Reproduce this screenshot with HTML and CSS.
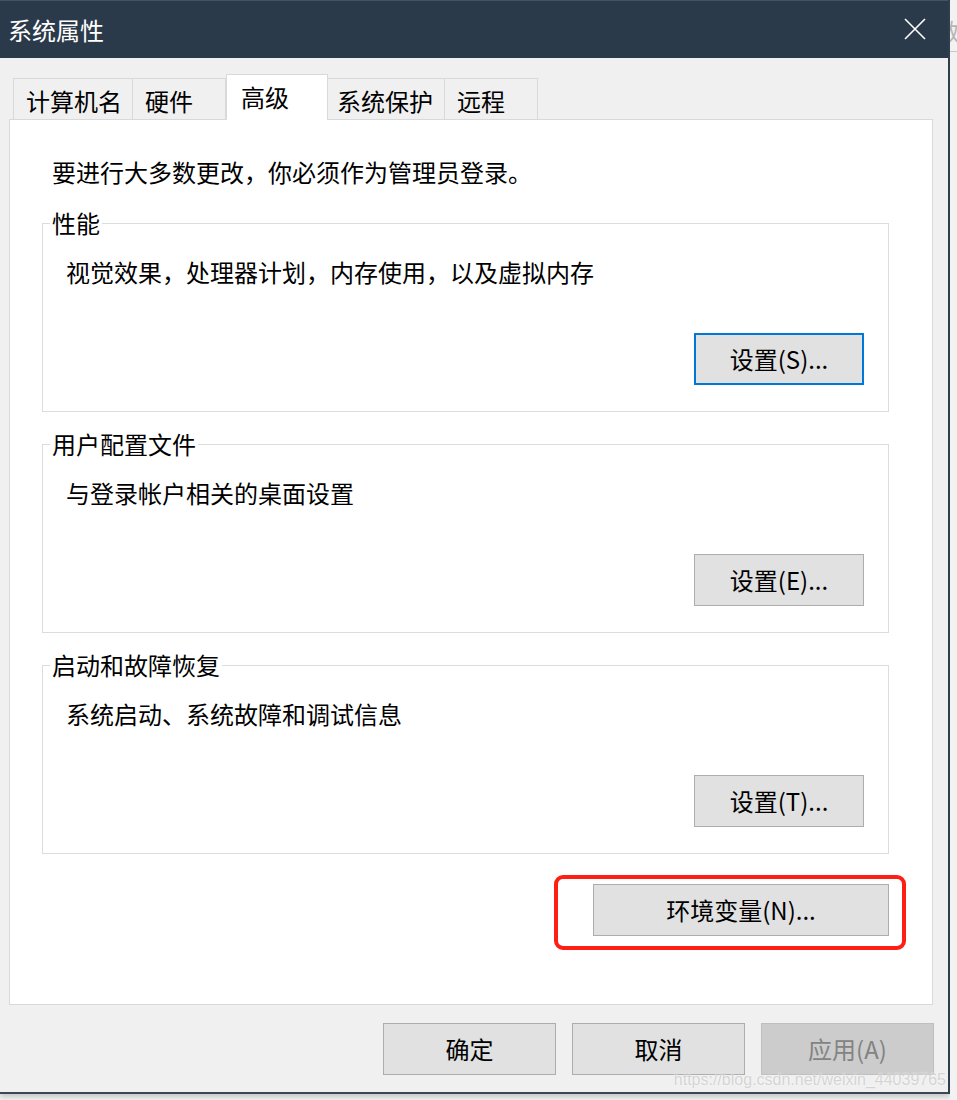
FILE: index.html
```html
<!DOCTYPE html>
<html lang="zh-CN">
<head>
  <meta charset="UTF-8" />
  <meta name="viewport" content="width=device-width, initial-scale=1.0"/>
  <title>系统属性</title>
  <link rel="stylesheet" href="styles.css">
</head>
<body>
  <div class="screen">
    <div class="window">
      <div class="titlebar">
        <span class="title">系统属性</span>
        <svg class="close" width="22" height="22" viewBox="0 0 22 22">
          <path d="M1 1 L21 21 M21 1 L1 21" stroke="#ffffff" stroke-width="1.6" fill="none"/>
        </svg>
      </div>

      <div class="content">
        <div class="tabs">
          <div class="tab tab-name">计算机名</div>
          <div class="tab tab-hw">硬件</div>
          <div class="tab tab-active">高级</div>
          <div class="tab tab-protect">系统保护</div>
          <div class="tab tab-remote">远程</div>
        </div>

        <div class="panel">
          <p class="intro">要进行大多数更改，你必须作为管理员登录。</p>

          <fieldset class="group">
            <legend>性能</legend>
            <p class="desc">视觉效果，处理器计划，内存使用，以及虚拟内存</p>
            <div class="group-actions">
              <button class="btn btn-focus">设置(S)...</button>
            </div>
          </fieldset>

          <fieldset class="group">
            <legend>用户配置文件</legend>
            <p class="desc">与登录帐户相关的桌面设置</p>
            <div class="group-actions">
              <button class="btn">设置(E)...</button>
            </div>
          </fieldset>

          <fieldset class="group">
            <legend>启动和故障恢复</legend>
            <p class="desc">系统启动、系统故障和调试信息</p>
            <div class="group-actions">
              <button class="btn">设置(T)...</button>
            </div>
          </fieldset>

          <div class="env-row">
            <div class="highlight">
              <button class="btn btn-env">环境变量(N)...</button>
            </div>
          </div>
        </div>

        <div class="footer">
          <button class="btn btn-footer">确定</button>
          <button class="btn btn-footer">取消</button>
          <button class="btn btn-footer btn-disabled">应用(A)</button>
        </div>
        <span class="watermark">https://blog.csdn.net/weixin_44039765</span>
      </div>
    </div>
    <div class="outside">
      <span class="outside-char">数</span>
      <div class="outside-line"></div>
    </div>
  </div>
</body>
</html>
```

FILE: styles.css
```css
body {
  margin: 0;
  background-color: #f2f2f2;
  font-family: "Noto Sans CJK SC", "Microsoft YaHei", sans-serif;
  color: #000;
}

.screen {
  display: flex;
  width: 957px;
  height: 1100px;
  overflow: hidden;
}

.window {
  width: 948px;
  border-right: 2px solid #2f3e4d;
  display: flex;
  flex-direction: column;
  align-self: flex-start;
  box-shadow: 0 3px 5px rgba(0,0,0,0.18);
}

.titlebar {
  height: 57px;
  border-top: 1px solid #46525f;
  background-color: #2b3a4a;
  display: flex;
  align-items: center;
  justify-content: space-between;
  padding: 0 22px 0 8px;
}

.title {
  color: #ffffff;
  font-size: 24px;
  line-height: 30px;
}

.close {
  display: block;
  margin-top: -1px;
}

.content {
  position: relative;
  background-color: #f0f0f0;
  padding: 16px 0 17px 0;
  border-bottom: 2px solid #3a4856;
}

/* tabs */
.tabs {
  display: flex;
  align-items: flex-end;
  padding-left: 13px;
  height: 46px;
  margin-bottom: -1px;
  position: relative;
  z-index: 1;
}

.tab {
  box-sizing: border-box;
  height: 41px;
  border: 1px solid #d9d9d9;
  border-bottom: none;
  font-size: 24px;
  line-height: 43px;
  padding-left: 12px;
  margin-bottom: 1px;
  white-space: nowrap;
}

.tab + .tab {
  border-left: none;
}

.tab-name { width: 120px; }
.tab-hw { width: 93px; }
.tab-protect { width: 117px; padding-left: 9px; }
.tab-remote { width: 93px; }

.tab-active {
  width: 102px;
  height: 46px;
  margin-bottom: 0;
  background-color: #ffffff;
  border-left: 1px solid #d9d9d9 !important;
  padding-left: 14px;
  line-height: 44px;
}

.tab-active + .tab {
  border-left: none;
}

/* panel */
.panel {
  margin: 0 15px 0 9px;
  background-color: #ffffff;
  border: 1px solid #d9d9d9;
  padding: 37px 0 54px 0;
}

.intro {
  margin: 0 0 0 42px;
  font-size: 24px;
  line-height: 30px;
}

.group {
  margin: 21px 43px 0 32px;
  padding: 0;
  border: 1px solid #dcdcdc;
  min-inline-size: 0;
}

.group legend {
  margin-left: 7px;
  padding: 0 2px;
  font-size: 24px;
  line-height: 30px;
}

.group + .group {
  margin-top: 17px;
}

.desc {
  margin: 19px 0 0 23px;
  font-size: 24px;
  line-height: 30px;
}

.group-actions {
  display: flex;
  justify-content: flex-end;
  padding: 46px 24px 26px 0;
}

.btn {
  box-sizing: border-box;
  width: 170px;
  height: 52px;
  background-color: #e1e1e1;
  border: 1px solid #adadad;
  font-family: "Noto Sans CJK SC", "Microsoft YaHei", sans-serif;
  font-size: 24px;
  line-height: 30px;
  color: #000;
  padding: 0;
  cursor: pointer;
}

.btn-focus {
  border: 2px solid #0078d7;
}

.env-row {
  display: flex;
  justify-content: flex-end;
  margin: 21px 26px 0 0;
}

.highlight {
  border: 4px solid #ff1e14;
  border-radius: 9px;
  padding: 5px 13px 10px 35px;
}

.btn-env {
  width: 296px;
}

/* footer */
.footer {
  display: flex;
  justify-content: flex-end;
  gap: 16px;
  margin: 18px 14px 0 0;
}

.btn-footer {
  width: 173px;
}

.btn-disabled {
  background-color: #cccccc;
  border-color: #bfbfbf;
  color: #838383;
  cursor: default;
}

.watermark {
  position: absolute;
  right: 2px;
  bottom: 1px;
  font-family: "Liberation Sans", Arial, sans-serif;
  font-size: 16px;
  line-height: 22px;
  color: rgba(200,200,200,0.75);
  text-shadow: 0 0 2px rgba(255,255,255,0.9);
  white-space: nowrap;
}

/* area beside the window */
.outside {
  flex: 1;
  overflow: hidden;
  background-color: #f2f2f2;
  padding-top: 16px;
}

.outside-char {
  display: block;
  margin-left: -14px;
  font-size: 24px;
  line-height: 30px;
  color: #b5b5b5;
}

.outside-line {
  margin-top: 5px;
  height: 1px;
  background-color: #c8c8c8;
}
```
